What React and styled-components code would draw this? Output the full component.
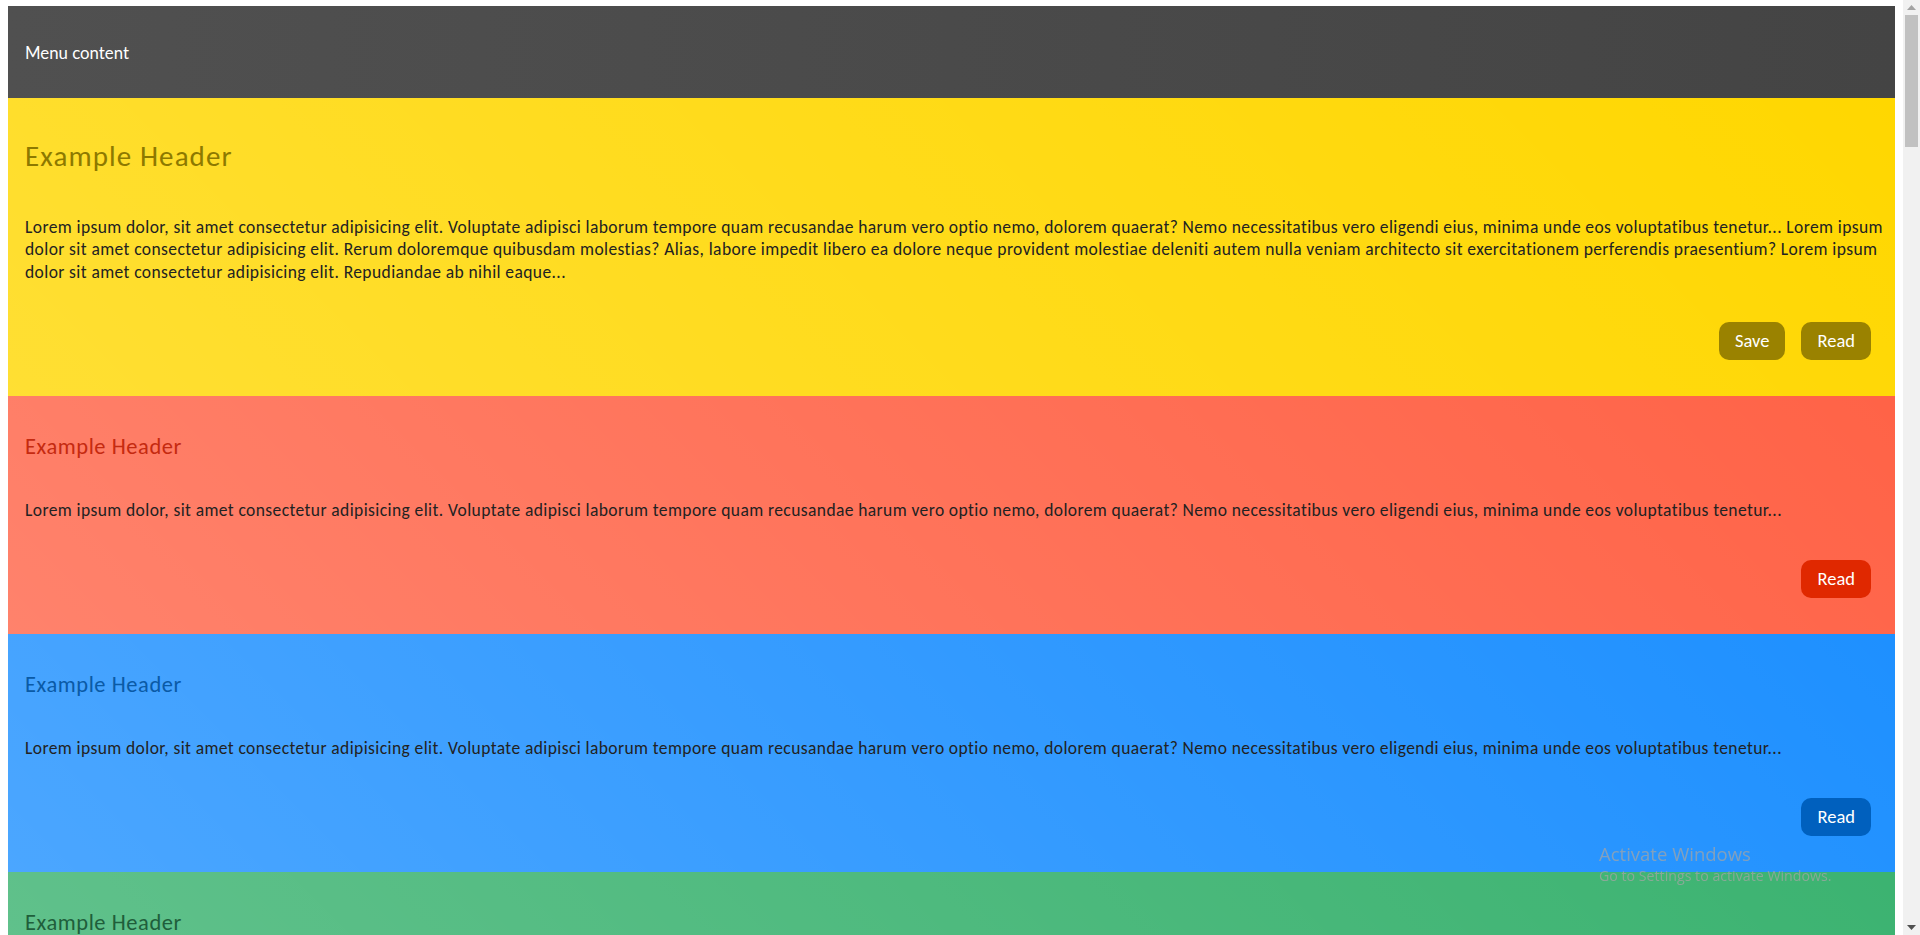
import React from "react";
import styled, { createGlobalStyle } from "styled-components";

const GlobalStyle = createGlobalStyle`
  html, body { background: #ffffff; }
  body {
    margin: 6px 25px 8px 8px;
    font-family: Calibri, Carlito, Lato, "Open Sans", sans-serif;
  }
  * { box-sizing: border-box; }
`;

const Page = styled.div`
  display: flex;
  flex-direction: column;
`;

const Menu = styled.nav`
  height: 92px;
  display: flex;
  align-items: center;
  padding: 0 17px;
  background: linear-gradient(to right, #505050, #444444);
  color: #ffffff;
  font-family: Lato, "Open Sans", sans-serif;
  font-size: 16.8px;
`;

const Card = styled.section`
  display: flex;
  flex-direction: column;
  padding: 0 17px 36px 17px;
  background: linear-gradient(45deg, rgba(255, 255, 255, 0.2), rgba(255, 255, 255, 0) 100%), ${(p) => p.$bg};
`;

const Title = styled.h2`
  margin: ${(p) => (p.$big ? "41px 0 42px" : "37px 0 39px")};
  font-family: Calibri, Carlito, Lato, sans-serif;
  font-weight: 400;
  font-size: ${(p) => (p.$big ? "29px" : "22.5px")};
  letter-spacing: ${(p) => (p.$big ? "1.1px" : "0.55px")};
  line-height: 1.2;
  color: ${(p) => p.$color};
`;

const Text = styled.p`
  margin: 0 -6px 38.5px 0;
  font-family: Calibri, Carlito, Lato, sans-serif;
  font-size: 17.5px;
  letter-spacing: 0.4px;
  line-height: 22.5px;
  color: #222222;
`;

const Actions = styled.div`
  display: flex;
  justify-content: flex-end;
  gap: 16px;
  padding-right: 7px;
`;

const Button = styled.button`
  height: 38px;
  padding: 0 16px;
  border: none;
  border-radius: 10px;
  background: ${(p) => p.$bg};
  color: #ffffff;
  font-family: Calibri, Carlito, Lato, sans-serif;
  font-size: 18.5px;
  cursor: pointer;
`;

const Watermark = styled.div`
  position: fixed;
  left: 1599px;
  top: 842px;
  color: rgba(165, 165, 165, 0.72);
  font-family: "Segoe UI", "Open Sans", sans-serif;
  pointer-events: none;
`;

const WatermarkTitle = styled.div`
  font-size: 18.5px;
  line-height: 24px;
`;

const WatermarkSub = styled.div`
  font-size: 14.2px;
  line-height: 20px;
`;

const Scrollbar = styled.div`
  position: fixed;
  top: 0;
  right: 0;
  width: 17px;
  height: 100vh;
  background: #f1f1f1;
  display: flex;
  flex-direction: column;
  align-items: center;
  justify-content: space-between;
`;

const Track = styled.div`
  flex: 1;
  width: 100%;
  display: flex;
  flex-direction: column;
  align-items: center;
`;

const Thumb = styled.div`
  width: 13px;
  height: 132px;
  background: #c1c1c1;
`;

const Arrow = styled.div`
  width: 17px;
  height: 15px;
  display: flex;
  align-items: center;
  justify-content: center;
  flex: none;
`;

const SHORT =
  "Lorem ipsum dolor, sit amet consectetur adipisicing elit. Voluptate adipisci laborum tempore quam recusandae harum vero optio nemo, dolorem quaerat? Nemo necessitatibus vero eligendi eius, minima unde eos voluptatibus tenetur...";
const LONG =
  SHORT +
  " Lorem ipsum dolor sit amet consectetur adipisicing elit. Rerum doloremque quibusdam molestias? Alias, labore impedit libero ea dolore neque provident molestiae deleniti autem nulla veniam architecto sit exercitationem perferendis praesentium? Lorem ipsum dolor sit amet consectetur adipisicing elit. Repudiandae ab nihil eaque...";

const THEMES = [
  { bg: "#ffd700", title: "#8d7900", btn: "#9a8200" },
  { bg: "#ff6347", title: "#c52a10", btn: "#e02800" },
  { bg: "#1e90ff", title: "#0a5aa6", btn: "#0060be" },
  { bg: "#3cb371", title: "#1f5e3b", btn: "#23804c" },
];

const cards = Array.from({ length: 24 }, (_, i) => ({
  id: i,
  theme: THEMES[i % 4],
  big: i === 0,
  text: i === 0 ? LONG : SHORT,
  save: i === 0,
}));

export default function App() {
  return (
    <>
      <GlobalStyle />
      <Page>
        <Menu>Menu content</Menu>
        {cards.map((c) => (
          <Card key={c.id} $bg={c.theme.bg}>
            <Title $big={c.big} $color={c.theme.title}>
              Example Header
            </Title>
            <Text>{c.text}</Text>
            <Actions>
              {c.save && <Button $bg={c.theme.btn}>Save</Button>}
              <Button $bg={c.theme.btn}>Read</Button>
            </Actions>
          </Card>
        ))}
      </Page>
      <Watermark>
        <WatermarkTitle>Activate Windows</WatermarkTitle>
        <WatermarkSub>Go to Settings to activate Windows.</WatermarkSub>
      </Watermark>
      <Scrollbar>
        <Track>
          <Arrow>
            <svg width="9" height="5" viewBox="0 0 9 5">
              <path d="M0 5 L4.5 0 L9 5 Z" fill="#a3a3a3" />
            </svg>
          </Arrow>
          <Thumb />
        </Track>
        <Arrow>
          <svg width="9" height="5" viewBox="0 0 9 5">
            <path d="M0 0 L4.5 5 L9 0 Z" fill="#505050" />
          </svg>
        </Arrow>
      </Scrollbar>
    </>
  );
}
